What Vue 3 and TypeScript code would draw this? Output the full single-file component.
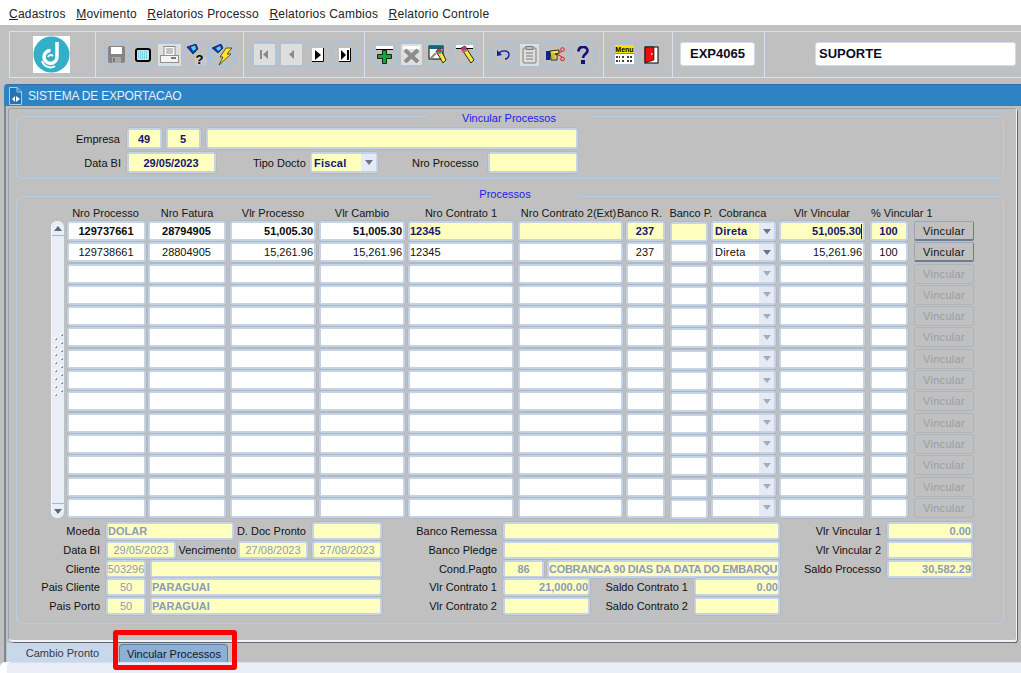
<script setup lang="ts">
  const menus = [
    { key: "C", rest: "adastros" },
    { key: "M", rest: "ovimento" },
    { key: "R", rest: "elatorios Processo" },
    { key: "R", rest: "elatorios Cambios" },
    { key: "R", rest: "elatorio Controle" },
  ];

  const headers = [
    "Nro Processo",
    "Nro Fatura",
    "Vlr Processo",
    "Vlr Cambio",
    "Nro Contrato 1",
    "Nro Contrato 2(Ext)",
    "Banco R.",
    "Banco P.",
    "Cobranca",
    "Vlr Vincular",
    "% Vincular 1",
  ];

  const rows = [
    { proc: "129737661", fat: "28794905", vp: "51,005.30", vc: "51,005.30", c1: "12345", br: "237", cob: "Direta", vv: "51,005.30", pct: "100" },
    { proc: "129738661", fat: "28804905", vp: "15,261.96", vc: "15,261.96", c1: "12345", br: "237", cob: "Direta", vv: "15,261.96", pct: "100" },
    ...Array.from({ length: 12 }, () => ({ proc: "", fat: "", vp: "", vc: "", c1: "", br: "", cob: "", vv: "", pct: "" })),
  ];

  const grips = Array.from({ length: 8 }, (_, i) => i);
</script>

<template>
  <div class="app">
    <div class="menu">
      <span v-for="m in menus" class="menu-item"><u>{{ m.key }}</u>{{ m.rest }}</span>
    </div>

    <div class="toolbar">
      <div class="tb-group logo-group">
        <svg class="logo" width="37" height="37" viewBox="0 0 37 37">
          <rect width="37" height="37" fill="#fff" />
          <circle cx="18.5" cy="18.5" r="18" fill="#33afc6" />
          <path d="M24 6 V21 a6.5 6.5 0 1 1 -6.5 -6.5" fill="none" stroke="#fff" stroke-width="3.5" />
          <path d="M15 21 a3 3 0 0 1 5 -1" fill="none" stroke="#fff" stroke-width="2" />
          <path d="M9 25 c2 6 9 8 13 5" fill="none" stroke="#fff" stroke-width="2" />
        </svg>
      </div>

      <div class="tb-group g1">
        <button class="tb">
          <svg width="17" height="17" viewBox="0 0 17 17"><rect x="0" y="0" width="17" height="17" rx="2" fill="#858585" /><rect x="3" y="1" width="11" height="7" fill="#fff" /><rect x="4" y="11" width="9" height="6" fill="#a8a8a8" /><rect x="5" y="12" width="2" height="4" fill="#777" /></svg>
        </button>
        <button class="tb">
          <svg width="16" height="14" viewBox="0 0 16 14"><rect x="1" y="1" width="14" height="12" rx="2" fill="#bfe8f0" stroke="#000" stroke-width="2" /><path d="M3 4h10M3 6h10M3 8h10M3 10h10" stroke="#3fb4dc" stroke-width="1" stroke-dasharray="1 1" /></svg>
        </button>
        <button class="tb lit">
          <svg width="19" height="18" viewBox="0 0 19 18"><rect x="4" y="0.5" width="11" height="9" fill="#fff" stroke="#8a8a8a" /><path d="M6 3h7M6 5h7M6 7h7" stroke="#8a8a8a" /><rect x="0.5" y="9.5" width="18" height="7" fill="#f4f4f4" stroke="#8f8f8f" /><rect x="11" y="11" width="5" height="2" fill="#777" /></svg>
        </button>
        <button class="tb">
          <svg width="21" height="22" viewBox="0 0 21 22"><path d="M1 3 L10 0 L12 5 L7 10 Z" fill="#1238d0" stroke="#000" stroke-width=".6" /><path d="M5 3 L9 1.5 L10 5 L7 7 Z" fill="#58d0f0" /><path d="M9 14h11M9 16h11M9 18h11M9 20h11M9 22h11" stroke="#f6f040" stroke-width="1.2" stroke-dasharray="1 1" /><text x="9.5" y="20" class="q">?</text></svg>
        </button>
        <button class="tb">
          <svg width="21" height="22" viewBox="0 0 21 22"><path d="M0 4 L9 0 L11 4 L6 9 Z" fill="#1238d0" stroke="#000" stroke-width=".6" /><path d="M4 4 L8 2 L9 5 L6 7 Z" fill="#58d0f0" /><path d="M14 4 L20 4 L15 10 L19 10 L7 21 L11 13 L8 13 Z" fill="#ffe820" stroke="#333" stroke-width=".8" /></svg>
        </button>
      </div>

      <div class="tb-group g2">
        <button class="tb lit">
          <svg width="17" height="17" viewBox="0 0 17 17"><rect x="4" y="4" width="2" height="9" fill="#8a8a8a" /><path d="M12 4 L7 8.5 L12 13 Z" fill="#8a8a8a" /></svg>
        </button>
        <button class="tb lit">
          <svg width="17" height="17" viewBox="0 0 17 17"><path d="M11 4 L6 8.5 L11 13 Z" fill="#8a8a8a" /></svg>
        </button>
        <button class="tb white">
          <svg width="12" height="14" viewBox="0 0 12 14"><path d="M3 2 L9 7 L3 12 Z" fill="#000" /><path d="M11.5 0 V13.5 H0" fill="none" stroke="#000" /></svg>
        </button>
        <button class="tb white">
          <svg width="12" height="14" viewBox="0 0 12 14"><path d="M2 2 L7 7 L2 12 Z" fill="#000" /><rect x="8" y="2" width="2" height="10" fill="#000" /><path d="M11.5 0 V13.5 H0" fill="none" stroke="#000" /></svg>
        </button>
      </div>

      <div class="tb-group g3">
        <button class="tb">
          <svg width="17" height="18" viewBox="0 0 17 18"><rect x="0" y="0" width="17" height="3" fill="#fff" /><rect x="0" y="3" width="17" height="1" fill="#000" /><path d="M6.5 4.5h4v4h5v4h-5v5h-4v-5h-5v-4h5z" fill="#12a63a" stroke="#000" stroke-width=".8" /></svg>
        </button>
        <button class="tb lit">
          <svg width="17" height="17" viewBox="0 0 17 17"><rect x="0" y="0" width="17" height="3" fill="#fff" /><path d="M2 4 L15 16 M15 4 L2 16" stroke="#8c8c8c" stroke-width="4" /></svg>
        </button>
        <button class="tb">
          <svg width="20" height="19" viewBox="0 0 20 19"><rect x="1" y="1" width="14" height="13" fill="#fff" stroke="#000" /><rect x="1" y="1" width="14" height="3" fill="#0f6b72" /><path d="M2 14 L8 8" stroke="#888" stroke-width="2" /><path d="M8 6 L12 3 L18 15 L15 18 Z" fill="#f2e64a" stroke="#000" stroke-width=".8" /><path d="M8 6 L12 3 L14 7 L10 10 Z" fill="#e0247a" /><rect x="10" y="7" width="3" height="2" fill="#38c060" /></svg>
        </button>
        <button class="tb">
          <svg width="20" height="19" viewBox="0 0 20 19"><rect x="1" y="0" width="17" height="3" fill="#fff" /><rect x="1" y="3" width="17" height="1" fill="#000" /><path d="M6 3 L10 1 L19 15 L16 18 Z" fill="#f2e64a" stroke="#000" stroke-width=".8" /><path d="M6 3 L10 1 L12 6 L8 8 Z" fill="#e0247a" /><rect x="8" y="5" width="3" height="2" fill="#38c060" /></svg>
        </button>
      </div>

      <div class="tb-group g4">
        <button class="tb">
          <svg width="14" height="11" viewBox="0 0 14 11"><path d="M1 7 L1 1 L6 6 Z" fill="#10209a" /><path d="M3 4 C6 1 13 1 13 5.5 C13 8 11 10 9 10" fill="none" stroke="#10209a" stroke-width="1.4" /></svg>
        </button>
        <button class="tb lit">
          <svg width="15" height="18" viewBox="0 0 15 18"><rect x="1" y="2" width="13" height="15" rx="1" fill="#dcdcdc" stroke="#7c7c7c" /><rect x="4" y="0.5" width="7" height="3" fill="#c0c0c0" stroke="#7c7c7c" /><path d="M4 7h7M4 10h7M4 13h7" stroke="#7c7c7c" /></svg>
        </button>
        <button class="tb">
          <svg width="19" height="15" viewBox="0 0 19 15"><rect x="0" y="4" width="4" height="9" fill="#10209a" /><path d="M4 4 L13 3 L13 6 L9 7 L11 8 L11 13 L5 13 Z" fill="#f0e640" stroke="#000" stroke-width=".8" /><path d="M6 6v6M8 6v6" stroke="#555" stroke-width=".6" /><circle cx="16.5" cy="2.5" r="1.8" fill="none" stroke="#e01818" /><circle cx="16.5" cy="12" r="1.8" fill="none" stroke="#e01818" /><path d="M11 8 L16 4 M11 7 L16 10" stroke="#e01818" /></svg>
        </button>
        <button class="tb">
          <svg width="12" height="18" viewBox="0 0 12 18"><path d="M1.5 5.5 C1.5 -0.5 10.5 -0.5 10.5 4.5 C10.5 8 6 8 6 12" fill="none" stroke="#10107e" stroke-width="2.6" /><rect x="4" y="14" width="4" height="4" fill="#10107e" /></svg>
        </button>
      </div>

      <div class="tb-group g5">
        <button class="tb">
          <svg width="19" height="19" viewBox="0 0 19 19"><rect width="19" height="8" fill="#ffe000" /><text x="0.3" y="7" class="mn">Menu</text><rect y="8" width="19" height="1" fill="#14b8c0" /><rect y="9" width="19" height="10" fill="#fff" /><path d="M1 12h4M7 12h3M12 12h6M1 16h4M7 16h3M12 16h6" stroke="#000" stroke-width="1.5" stroke-dasharray="2 1" /></svg>
        </button>
        <button class="tb">
          <svg width="15" height="18" viewBox="0 0 15 18"><rect x="1" y="1" width="13" height="16" fill="#fff" stroke="#000" /><path d="M1 1 L10 1 L10 14 L1 17 Z" fill="#ef0a14" stroke="#000" stroke-width=".6" /><rect x="7" y="7" width="1.5" height="2" fill="#ffe000" /></svg>
        </button>
      </div>

      <div class="tb-group g6"><div class="tb-field code">EXP4065</div></div>
      <div class="tb-group g7"><div class="tb-field user">SUPORTE</div></div>
    </div>

    <div class="window">
      <div class="titlebar">
        <svg class="title-icon" width="13" height="18" viewBox="0 0 13 18">
          <path d="M0.5 0.5 H8 L12.5 5 V17.5 H0.5 Z" fill="#2272b4" stroke="#a9cdea" />
          <path d="M8 .5 V5 H12.5" fill="none" stroke="#a9cdea" />
          <path d="M6 9 L3 12 L6 15 Z M7 9 L11 12 L7 15 Z" fill="#fff" />
        </svg>
        <span>SISTEMA DE EXPORTACAO</span>
      </div>

      <div class="body">
        <div class="panel">
          <section class="group top-group">
            <h4 class="legend">Vincular Processos</h4>
            <div class="line">
              <label class="lb empresa">Empresa</label>
              <div class="fld yellow bold center f-emp">49</div>
              <div class="fld yellow bold center f-emp">5</div>
              <div class="fld yellow f-emp-name"></div>
            </div>
            <div class="line">
              <label class="lb databi">Data BI</label>
              <div class="fld yellow bold center f-date">29/05/2023</div>
              <label class="lb tipo">Tipo Docto</label>
              <div class="fld yellow bold select f-tipo">
                <span class="sel-text">Fiscal</span><span class="arrow"><i></i></span>
              </div>
              <label class="lb nro">Nro Processo</label>
              <div class="fld yellow f-nro"></div>
            </div>
          </section>

          <section class="group proc-group">
            <h4 class="legend">Processos</h4>
            <div class="grid-head">
              <span v-for="(h, i) in headers" class="hd" :class="'c' + i">{{ h }}</span>
            </div>
            <div class="grid-wrap">
              <div class="scroll">
                <div class="sc-btn up"><i></i></div>
                <div class="grip">
                  <template v-for="g in grips" :key="g"><b></b><b></b></template>
                </div>
                <div class="sc-btn down"><i></i></div>
              </div>
              <div class="grid">
                <div v-for="(r, i) in rows" class="row" :class="{ current: i === 0 }">
                  <div class="fld center plain c0">{{ r.proc }}</div>
                  <div class="fld center plain c1">{{ r.fat }}</div>
                  <div class="fld right plain c2">{{ r.vp }}</div>
                  <div class="fld right plain c3">{{ r.vc }}</div>
                  <div class="fld edit c4">{{ r.c1 }}</div>
                  <div class="fld edit c5"></div>
                  <div class="fld edit center c6">{{ r.br }}</div>
                  <div class="fld edit low c7"></div>
                  <div class="fld edit select c8" :class="{ off: !r.cob }">
                    <span class="sel-text">{{ r.cob }}</span><span class="arrow"><i></i></span>
                  </div>
                  <div class="fld edit right c9" :class="{ caret: i === 0 }">{{ r.vv }}</div>
                  <div class="fld edit center c10">{{ r.pct }}</div>
                  <button class="vinc c11" :class="{ off: !r.proc }">Vincular</button>
                </div>
              </div>
            </div>

            <div class="lower">
              <div class="col col-l">
                <div class="ln">
                  <label class="l">Moeda</label>
                  <div class="fld yellow dim w128">DOLAR</div>
                  <label class="l2 w-ddoc">D. Doc Pronto</label>
                  <div class="fld yellow dim w70"></div>
                </div>
                <div class="ln">
                  <label class="l">Data BI</label>
                  <div class="fld yellow dim center w70">29/05/2023</div>
                  <label class="l2 w-venc">Vencimento</label>
                  <div class="fld yellow dim center w70">27/08/2023</div>
                  <div class="fld yellow dim center w70 ml4">27/08/2023</div>
                </div>
                <div class="ln">
                  <label class="l">Cliente</label>
                  <div class="fld yellow dim center w40">503296</div>
                  <div class="fld yellow dim w232"></div>
                </div>
                <div class="ln">
                  <label class="l">Pais Cliente</label>
                  <div class="fld yellow dim center w40">50</div>
                  <div class="fld yellow dim w232">PARAGUAI</div>
                </div>
                <div class="ln">
                  <label class="l">Pais Porto</label>
                  <div class="fld yellow dim center w40">50</div>
                  <div class="fld yellow dim w232">PARAGUAI</div>
                </div>
              </div>

              <div class="col col-m">
                <div class="ln"><label class="l">Banco Remessa</label><div class="fld yellow dim w277"></div></div>
                <div class="ln"><label class="l">Banco Pledge</label><div class="fld yellow dim w277"></div></div>
                <div class="ln">
                  <label class="l">Cond.Pagto</label>
                  <div class="fld yellow dim center w41">86</div>
                  <div class="fld yellow dim w233 tight">COBRANCA 90 DIAS DA DATA DO EMBARQU</div>
                </div>
                <div class="ln">
                  <label class="l">Vlr Contrato 1</label>
                  <div class="fld yellow dim right w87">21,000.00</div>
                  <label class="l2 w-saldo">Saldo Contrato 1</label>
                  <div class="fld yellow dim right w86">0.00</div>
                </div>
                <div class="ln">
                  <label class="l">Vlr Contrato 2</label>
                  <div class="fld yellow dim w87"></div>
                  <label class="l2 w-saldo">Saldo Contrato 2</label>
                  <div class="fld yellow dim w86"></div>
                </div>
              </div>

              <div class="col col-r">
                <div class="ln"><label class="l">Vlr Vincular 1</label><div class="fld yellow dim right w86">0.00</div></div>
                <div class="ln"><label class="l">Vlr Vincular 2</label><div class="fld yellow dim w86"></div></div>
                <div class="ln"><label class="l">Saldo Processo</label><div class="fld yellow dim right w86">30,582.29</div></div>
              </div>
            </div>
          </section>
        </div>
      </div>

      <div class="tabs">
        <div class="tab">Cambio Pronto</div>
        <div class="tab active">Vincular Processos</div>
        <div class="highlight"></div>
      </div>
      <div class="status"></div>
    </div>
  </div>
</template>

<style scoped>
  .app {
    position: relative;
    display: flex;
    flex-direction: column;
    width: 1021px;
    height: 673px;
    overflow: hidden;
    background: #c0c0c0;
    color: #101010;
    font-family: "Liberation Sans", Arial, sans-serif;
    font-size: 11px;
  }

  /* menu */
  .menu {
    display: flex;
    gap: 10.5px;
    height: 25px;
    padding: 2px 0 0 9px;
    background: #fff;
    align-items: center;
    font-size: 12px;
    letter-spacing: 0.22px;
    color: #222;
    box-sizing: border-box;
    flex: none;
  }

  /* toolbar */
  .toolbar {
    display: flex;
    flex: none;
    height: 47px;
    margin: 6px 0 0 9px;
    border-top: 1px solid #d4e2f4;
    border-bottom: 1px solid #d4e2f4;
    border-left: 1px solid #d4e2f4;
    box-sizing: border-box;
  }

  .tb-group {
    display: flex;
    align-items: center;
    box-sizing: border-box;
    height: 100%;
    border-right: 1px solid #d4e2f4;
  }

  .logo-group {
    width: 86px;
    padding-left: 23px;
  }

  .g1 { width: 148px; padding-left: 8px; gap: 1.5px; }
  .g2 { width: 121px; padding-left: 8px; gap: 1.7px; }
  .g3 { width: 119px; padding-left: 7px; gap: 1.7px; }
  .g4 { width: 120px; padding-left: 6px; gap: 1.7px; }
  .g5 { width: 69px; padding-left: 8px; gap: 1.7px; }
  .g6 { width: 92px; padding-left: 7px; }
  .g7 { flex: 1; padding-left: 50px; border-right: 0; }

  .tb {
    display: flex;
    align-items: center;
    justify-content: center;
    width: 25px;
    height: 25px;
    padding: 0;
    border: 1px solid #a9c1dd;
    border-radius: 4px;
    background: #c0c0c0;
    box-sizing: border-box;
  }

  .tb.lit svg {
    background: #dedede;
    outline: 2px solid #dedede;
  }

  .tb.white svg {
    background: #fff;
  }

  .q {
    font: bold 13px "Liberation Sans", sans-serif;
    fill: #000;
  }

  .mn {
    font: bold 7px "Liberation Sans", sans-serif;
    fill: #000;
  }

  .tb-field {
    height: 24px;
    line-height: 22px;
    margin-bottom: 1px;
    background: #fff;
    border: 1px solid #cfdcee;
    border-radius: 3px;
    box-sizing: border-box;
    font-size: 13px;
    font-weight: bold;
    color: #0c0c24;
  }

  .code { width: 75px; text-align: center; }
  .user { width: 201px; padding-left: 3px; }

  /* window */
  .window {
    display: flex;
    flex-direction: column;
    flex: 1;
    min-height: 0;
    margin-top: 6px;
    margin-left: 4px;
  }

  .titlebar {
    display: flex;
    flex: none;
    align-items: center;
    gap: 6px;
    height: 22px;
    padding-left: 5px;
    background: #2e83c3;
    border-top: 1px solid #3a6fa0;
    border-radius: 4px 0 0 0;
    box-sizing: border-box;
    color: #e6f0fa;
    font-size: 12px;
    letter-spacing: -0.2px;
  }

  .body {
    flex: 1;
    min-height: 0;
    border-left: 2px solid #7d8796;
    padding: 2px 4px 0 2px;
    background: #c0c0c0;
  }

  .panel {
    height: 100%;
    box-sizing: border-box;
    padding: 7px 12px 0 7px;
    border: 1px solid #9aa3ad;
    border-right-color: #f0f4fa;
    border-bottom: 2px solid #f0f4fa;
    border-radius: 3px 3px 3px 5px;
    box-shadow: 1px 1px 0 #666;
  }

  .group {
    position: relative;
    border: 1px solid #b8cce6;
    border-radius: 6px;
  }

  .legend {
    position: absolute;
    top: -5px;
    left: 0;
    right: 0;
    margin: 0 auto;
    width: fit-content;
    padding: 0 35px;
    background: #c0c0c0;
    font-size: 11px;
    font-weight: normal;
    color: #1a1af0;
    transform: translateX(-1px);
  }

  .proc-group .legend {
    top: -9px;
    padding: 0 47px;
    transform: translateX(-5px);
  }

  .top-group {
    height: 63px;
    padding-top: 11px;
    box-sizing: border-box;
  }

  .line {
    display: flex;
    align-items: center;
    height: 21px;
    margin-bottom: 3px;
  }

  .lb {
    white-space: nowrap;
  }

  .empresa { width: 103px; text-align: right; margin-right: 7px; }
  .databi { width: 104px; text-align: right; margin-right: 6px; }
  .tipo { margin-left: 37px; width: 51px; margin-right: 6px; }
  .nro { margin-left: 34px; width: 66px; margin-right: 10px; }

  .fld {
    display: flex;
    align-items: center;
    flex: none;
    height: 100%;
    box-sizing: border-box;
    padding: 0 1px 0 0;
    border: 2px solid #c4d3e6;
    border-radius: 3px;
    background: #fff;
    white-space: nowrap;
    overflow: hidden;
    box-shadow: 0 0 0 0.5px #a8b0bc;
  }

  .yellow { background: #ffffc0; color: #14146e; }
  .bold { font-weight: bold; }
  .center { justify-content: center; }
  .right { justify-content: flex-end; }

  .f-emp { width: 35px; margin-right: 4px; }
  .f-emp-name { width: 372px; margin-left: 1px; }
  .f-date { width: 89px; }
  .f-tipo { width: 68px; padding-right: 0; }
  .f-nro { width: 90px; }

  .select { padding-right: 0; justify-content: space-between; }

  .sel-text { padding-left: 2px; letter-spacing: 0.2px; }

  .arrow {
    display: flex;
    align-items: center;
    justify-content: center;
    align-self: stretch;
    width: 15px;
    background: #e6eaf4;
  }

  .arrow i {
    width: 0;
    height: 0;
    border-left: 4px solid transparent;
    border-right: 4px solid transparent;
    border-top: 5px solid #6c7484;
  }

  /* processos */
  .proc-group {
    height: 428px;
    margin-top: 17px;
    padding-top: 10px;
    box-sizing: border-box;
  }

  .grid-head {
    display: flex;
    height: 12px;
    margin: 0 0 2px 50px;
    align-items: center;
    color: #161616;
  }

  .hd {
    display: flex;
    justify-content: center;
    white-space: nowrap;
  }

  .grid-head .c0 { margin-left: -1px; margin-right: 3px; }
  .grid-head .c5 { margin-left: -2px; margin-right: 5px; }
  .grid-head .c6 { margin-left: -6px; margin-right: 11px; }
  .grid-head .c7 { margin-left: 2px; margin-right: 1px; }
  .grid-head .c8 { margin-left: -1px; margin-right: 4px; }
  .grid-head .c10 { justify-content: flex-start; padding-left: 1px; }

  .grid-wrap {
    display: flex;
    margin-left: 34px;
  }

  .scroll {
    display: flex;
    flex-direction: column;
    justify-content: space-between;
    align-items: center;
    width: 13px;
    height: 297px;
    margin-right: 3px;
    background: #e8edf6;
    border-left: 1px solid #f4f7fb;
    border-radius: 6px;
    box-sizing: border-box;
  }

  .sc-btn {
    display: flex;
    align-items: center;
    justify-content: center;
    width: 100%;
    height: 15px;
    border-bottom: 1px solid #aab6c6;
    box-sizing: border-box;
  }

  .sc-btn.down {
    border-bottom: 0;
    border-top: 1px solid #aab6c6;
  }

  .sc-btn i {
    width: 0;
    height: 0;
    border-left: 4px solid transparent;
    border-right: 4px solid transparent;
    border-bottom: 5px solid #5f6878;
  }

  .sc-btn.down i {
    border-bottom: 0;
    border-top: 5px solid #5f6878;
  }

  .grip {
    display: grid;
    grid-template-columns: 3px 3px;
    gap: 5px 3px;
    width: 9px;
    margin-bottom: 14px;
  }

  .grip b {
    width: 3px;
    height: 3px;
    background: linear-gradient(135deg, #fff 60%, #8a94a6 60%);
  }

  .grip b:nth-child(odd) {
    margin-top: 4px;
    margin-bottom: -4px;
  }

  .grid {
    display: flex;
    flex-direction: column;
    gap: 1.3px;
  }

  .row {
    display: flex;
    height: 20px;
  }

  .row.current { font-weight: bold; color: #0a0a0a; }
  .row.current .edit { background: #ffffc0; color: #14146e; }

  .c0 { width: 79px; margin-right: 2px; }
  .c1 { width: 78px; margin-right: 4px; }
  .c2 { width: 86px; margin-right: 3px; }
  .c3 { width: 86px; margin-right: 3px; }
  .c4 { width: 106px; margin-right: 4px; }
  .c5 { width: 105px; margin-right: 3px; }
  .c6 { width: 39px; margin-right: 5px; }
  .c7 { width: 38px; margin-right: 3px; }
  .c8 { width: 65px; margin-right: 3px; }
  .c9 { width: 86px; margin-right: 5px; }
  .c10 { width: 38px; margin-right: 6px; }
  .c11 { width: 60px; }

  .low { margin-top: 1px; }

  .select.off .arrow i { border-top-color: #a4acb8; }

  .caret::after {
    content: "";
    width: 1px;
    height: 15px;
    background: #14146e;
  }

  .vinc {
    padding: 0;
    border: 1px solid #9ba7b6;
    border-right-color: #6e7c90;
    border-bottom: 2px solid #6e7c90;
    border-radius: 2px;
    background: #c0c0c0;
    box-sizing: border-box;
    font: inherit;
    font-weight: normal;
    color: #101010;
    letter-spacing: 0.3px;
  }

  .vinc.off {
    color: #989ea6;
    border-color: #adb4bc;
    border-bottom-width: 1px;
  }

  /* campos de baixo */
  .lower {
    display: flex;
    margin-top: 4px;
  }

  .col {
    display: flex;
    flex-direction: column;
    gap: 0.8px;
    flex: none;
  }

  .col-l { width: 365px; }
  .col-m { width: 398px; }
  .col-r { width: 193px; }

  .ln {
    display: flex;
    align-items: center;
    height: 18px;
  }

  .l {
    flex: none;
    text-align: right;
    margin-right: 6px;
    white-space: nowrap;
  }

  .col-l .l { width: 83px; }
  .col-m .l { width: 115px; }
  .col-r .l { width: 101px; }

  .l2 {
    flex: none;
    text-align: right;
    white-space: nowrap;
  }

  .w-ddoc { width: 72px; margin-right: 6px; }
  .w-venc { width: 60px; margin-right: 2px; }
  .w-saldo { width: 98px; margin-right: 6px; }

  .dim { color: #8c9cb6; font-weight: bold; padding-right: 0; }
  .tight { letter-spacing: -0.28px; }

  .w40 { width: 40px; margin-right: 4px; font-weight: normal; }
  .w41 { width: 41px; margin-right: 3px; }
  .w70 { width: 70px; font-weight: normal; }
  .w86 { width: 86px; }
  .w87 { width: 87px; }
  .w128 { width: 128px; }
  .w232 { width: 232px; }
  .w233 { width: 233px; }
  .w277 { width: 277px; }
  .ml4 { margin-left: 4px; }

  /* abas */
  .tabs {
    position: relative;
    display: flex;
    flex: none;
    height: 20px;
    align-items: flex-end;
    gap: 4px;
    padding-left: 1px;
    border-left: 2px solid #7d8796;
  }

  .tab {
    display: flex;
    align-items: center;
    justify-content: center;
    height: 19px;
    width: 108px;
    padding-left: 3px;
    background: #c8d8ea;
    color: #333a48;
    box-sizing: border-box;
  }

  .tab.active {
    width: 109px;
    height: 18px;
    padding-left: 1px;
    background: #8db0d4;
    color: #10182c;
    border: 1px solid #5d7ea3;
    border-bottom: 0;
    border-radius: 4px 4px 0 0;
  }

  .highlight {
    position: absolute;
    left: 107px;
    top: -12px;
    width: 124px;
    height: 40px;
    border: 5px solid #f00;
    border-radius: 3px;
    box-sizing: border-box;
    z-index: 2;
  }

  .status {
    flex: none;
    height: 11px;
    margin-left: 3px;
    background: #e8edf6;
    border-top: 1px solid #d4e0ee;
    border-radius: 5px 0 0 0;
    box-sizing: border-box;
    box-shadow: -7px 0 0 #fff;
  }
</style>
